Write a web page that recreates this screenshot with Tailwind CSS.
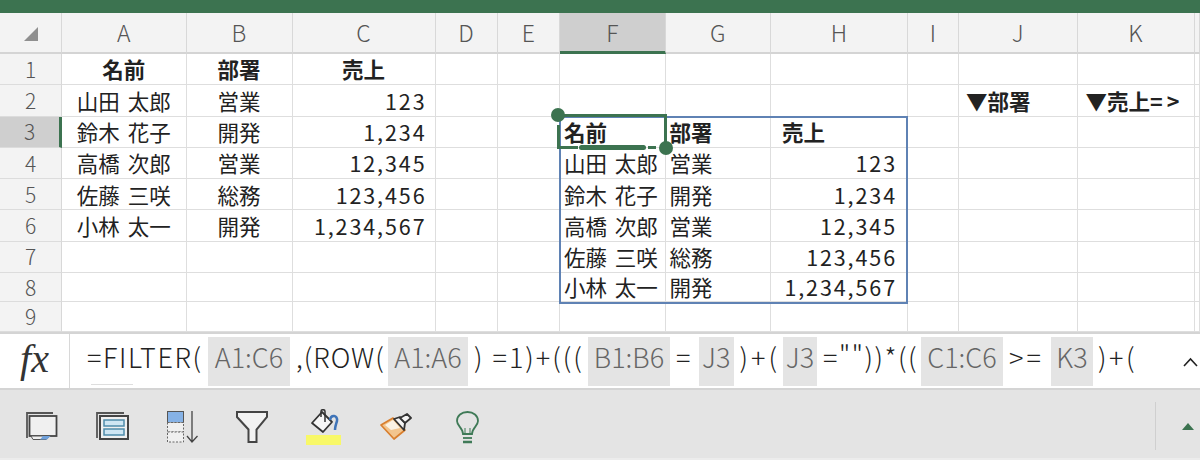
<!DOCTYPE html>
<html lang="ja">
<head>
    <meta charset="UTF-8">
    <title>Excel FILTER</title>
    <script src="https://cdn.jsdelivr.net/npm/@tailwindcss/browser@4"></script>
</head>
<body class="bg-white overflow-hidden font-['Noto_Sans_CJK_JP','Noto_Sans',sans-serif] text-[#222]">
<div class="w-[1200px] h-[462px] flex flex-col relative">
    <!-- title strip -->
    <div class="h-[13px] bg-[#3c7350]"></div>

    <!-- sheet -->
    <div id="sheet" class="relative h-[319px] grid grid-cols-[62px_124.5px_106px_143px_62px_62.5px_105.5px_105.5px_137px_51px_118.5px_117px_5.5px] grid-rows-[41px_31.3px_31.3px_31.3px_31.3px_31.3px_31.3px_31.3px_28.9px]"></div>

    <!-- formula bar -->
    <div class="relative h-[58px] border-t-2 border-b-2 border-[#d4d4d4] flex items-center text-[27px] font-light text-[#222] whitespace-nowrap leading-none">
        <div class="w-[70px] h-full shrink-0 border-r border-[#d8d8d8] flex items-center justify-center font-['Liberation_Serif',serif] italic text-[40px] leading-none text-[#333] pb-1">fx</div>
        <span class="w-[138px] pl-[17px] pb-[10px] shrink-0 tracking-[1.6px]">=FILTER(</span>
        <span class="w-[82px] h-[49px] pb-[10px] shrink-0 bg-[#e4e4e4] text-[#666] flex items-center justify-center">A1:C6</span>
        <span class="w-[98px] pl-[6px] pb-[10px] shrink-0 tracking-[1px]">,(ROW(</span>
        <span class="w-[80px] h-[49px] pb-[10px] shrink-0 bg-[#e4e4e4] text-[#666] flex items-center justify-center">A1:A6</span>
        <span class="w-[120px] pl-[6px] pb-[10px] shrink-0 tracking-[2px]">) =1)+(((</span>
        <span class="w-[82px] h-[49px] pb-[10px] shrink-0 bg-[#e4e4e4] text-[#666] flex items-center justify-center">B1:B6</span>
        <span class="w-[29px] pl-[6px] pb-[10px] shrink-0">=</span>
        <span class="w-[34.5px] h-[49px] pb-[10px] shrink-0 bg-[#e4e4e4] text-[#666] flex items-center justify-center">J3</span>
        <span class="w-[49.5px] pl-[6px] pb-[10px] shrink-0 tracking-[3px]">)+(</span>
        <span class="w-[34px] h-[49px] pb-[10px] shrink-0 bg-[#e4e4e4] text-[#666] flex items-center justify-center">J3</span>
        <span class="w-[104px] pl-[6px] pb-[10px] shrink-0 tracking-[1.5px]">=""))*((</span>
        <span class="w-[82px] h-[49px] pb-[10px] shrink-0 bg-[#e4e4e4] text-[#666] flex items-center justify-center">C1:C6</span>
        <span class="w-[48px] pl-[6px] pb-[10px] shrink-0 tracking-[3px]">&gt;=</span>
        <span class="w-[42px] h-[49px] pb-[10px] shrink-0 bg-[#e4e4e4] text-[#666] flex items-center justify-center">K3</span>
        <span class="pl-[5px] pb-[10px] shrink-0 tracking-[2.5px]">)+(</span>
        <svg class="absolute left-[1183px] top-[23px]" width="15" height="10" viewBox="0 0 15 10" fill="none" stroke="#222" stroke-width="1.6"><path d="M1 9 7.5 2 14 9"/></svg>
        <div class="absolute left-[91px] top-[50px] w-[42px] h-px bg-[#dedede]"></div>
    </div>

    <!-- toolbar -->
    <div class="relative h-[70px] bg-[#e4e4e4] border-b-2 border-[#ececec] flex items-start pt-[19px]">
        <svg class="ml-[26px] mt-[3px] shrink-0" width="32" height="28" viewBox="0 0 32 28" fill="none">
            <path d="M1 26V1H27" stroke="#555" stroke-width="1.8"/>
            <rect x="3.5" y="4" width="27" height="20" fill="#f0f0f0" stroke="#444" stroke-width="1.8"/>
            <path d="M5 24 7 27.5H20L24 24Z" fill="#f0f0f0" stroke="#555"/>
            <path d="M14 27.5H21L24.500 24H17Z" fill="#6fa1dc"/>
        </svg>
        <svg class="ml-[38px] mt-[3px] shrink-0" width="33" height="28" viewBox="0 0 33 28" fill="none">
            <path d="M1 26V1H28" stroke="#555" stroke-width="1.800"/>
            <rect x="4" y="4" width="28" height="23" fill="#f0f0f0" stroke="#444" stroke-width="2"/>
            <rect x="8" y="8" width="20" height="6" fill="#cfe6f3" stroke="#4f8cab" stroke-width="1.500"/>
            <rect x="8" y="17" width="20" height="6" fill="#cfe6f3" stroke="#4f8cab" stroke-width="1.500"/>
        </svg>
        <svg class="ml-[38px] mt-[2px] shrink-0" width="32" height="32" viewBox="0 0 32 32" fill="none">
            <rect x="0.500" y="0.500" width="16" height="11" fill="#86b2e6" stroke="#555"/>
            <rect x="0.500" y="11.500" width="16" height="9.500" fill="#f0f0f0" stroke="#666" stroke-dasharray="2 1.500"/>
            <rect x="0.500" y="21" width="16" height="10" fill="#f0f0f0" stroke="#666" stroke-dasharray="2 1.500"/>
            <path d="M25 0V30M20 25 25 31 30.500 25" stroke="#444" stroke-width="1.300"/>
        </svg>
        <svg class="ml-[37px] mt-[2px] shrink-0" width="32" height="32" viewBox="0 0 32 32">
            <path d="M1 1H31V6L20.500 18.500V31H12.500V18.500L1 6Z" fill="#f2f2f2" stroke="#444" stroke-width="2"/>
        </svg>
        <svg class="ml-[38px] shrink-0" width="35" height="36" viewBox="0 0 35 36" fill="none">
            <path d="M6 14 16 3 26 13 17 23Z" fill="#f6f6f6" stroke="#333" stroke-width="1.800" stroke-linejoin="round"/>
            <path d="M15 8V2.500C15 0 19 0 19 2.500V13" stroke="#333" stroke-width="1.500"/>
            <path d="M24 11C25 5 32 6 31 12 30 15 29 18 29 21" stroke="#3f74b8" stroke-width="2.500"/>
            <rect x="0" y="26" width="35" height="10" fill="#f8f868"/>
        </svg>
        <svg class="ml-[39px] mt-[4px] shrink-0" width="32" height="28" viewBox="0 0 32 28" fill="none">
            <path d="M1 12 13 5 25 17 14 26Z" fill="#f3c58e" stroke="#d97f2e" stroke-width="1.700" stroke-linejoin="round"/>
            <path d="M5 12 13 7 20 15 11 17Z" fill="#fbf2e4"/>
            <path d="M14 6 20 4 25 10 24 17Z" fill="#f4f4f4" stroke="#333" stroke-width="1.800" stroke-linejoin="round"/>
            <path d="M20 5 27 1 31 5 25 10Z" fill="#f4f4f4" stroke="#333" stroke-width="1.800" stroke-linejoin="round"/>
        </svg>
        <svg class="ml-[44px] mt-[2px] shrink-0" width="23" height="33" viewBox="0 0 23 33" fill="none" stroke="#3f7a57" stroke-width="1.800">
            <path d="M7 23C7 17 1 15 1 10 1 4.500 5.500 1 11.500 1S22 4.500 22 10C22 15 16 17 16 23Z"/>
            <path d="M7 27H16"/>
            <path d="M7 31H16" stroke-width="2.500"/>
            <path d="M9 23V17M14 23V17" stroke-width="1"/>
        </svg>
        <div class="absolute left-[1155px] top-[12px] w-px h-[48px] bg-[#cfcfcf]"></div>
        <div class="absolute left-[1182px] top-[33px] w-0 h-0 border-x-[6px] border-x-transparent border-b-[7px] border-b-[#3c7350]"></div>
    </div>
</div>

<script>
    const colLabels = ["", "A", "B", "C", "D", "E", "F", "G", "H", "I", "J", "K", ""];
    // row -> column index -> [text, extra classes]
    const center = "justify-center text-[21.5px] [word-spacing:3px]";
    const bold = "justify-center text-[21.5px] font-bold";
    const boldLeft = "justify-start pl-[4px] text-[21.5px] font-bold";
    const left = "justify-start pl-[4px] text-[21.5px] [word-spacing:3px]";
    const numC = "justify-end pr-[8px] text-[21.5px] tracking-[1.9px]";
    const numH = "justify-end pr-[10px] text-[21.5px] tracking-[1.9px]";
    const data = {
        1: {1: ["名前", bold], 2: ["部署", bold], 3: ["売上", bold]},
        2: {1: ["山田 太郎", center], 2: ["営業", center], 3: ["123", numC], 10: ["▼部署", "justify-start pl-[7px] text-[21.5px] font-bold"], 11: ['▼売上<span class="tracking-[4px]">=&gt;</span>', "justify-start pl-[8px] text-[21.5px] font-bold"]},
        3: {1: ["鈴木 花子", center], 2: ["開発", center], 3: ["1,234", numC], 6: ["名前", boldLeft], 7: ["部署", boldLeft], 8: ["売上", "justify-start pl-[11px] text-[21.5px] font-bold"]},
        4: {1: ["高橋 次郎", center], 2: ["営業", center], 3: ["12,345", numC], 6: ["山田 太郎", left], 7: ["営業", left], 8: ["123", numH]},
        5: {1: ["佐藤 三咲", center], 2: ["総務", center], 3: ["123,456", numC], 6: ["鈴木 花子", left], 7: ["開発", left], 8: ["1,234", numH]},
        6: {1: ["小林 太一", center], 2: ["開発", center], 3: ["1,234,567", numC], 6: ["高橋 次郎", left], 7: ["営業", left], 8: ["12,345", numH]},
        7: {6: ["佐藤 三咲", left], 7: ["総務", left], 8: ["123,456", numH]},
        8: {6: ["小林 太一", left], 7: ["開発", left], 8: ["1,234,567", numH]},
    };
    const sheet = document.getElementById("sheet");
    let html = "";
    colLabels.forEach((label, c) => {
        const sel = c === 6;
        const bg = sel ? "bg-[#cfcfcf] border-b-[3px] border-b-[#3c7350]" : "bg-[#f3f3f3] border-b-2 border-b-[#d4d4d4]";
        html += `<div class="${bg} border-r border-r-[#d8d8d8] flex items-center justify-center text-[23px] leading-none font-light text-[#555]">${label}</div>`;
    });
    for (let r = 1; r <= 9; r++) {
        const sel = r === 3;
        const bg = sel ? "bg-[#cfcfcf] border-r-[3px] border-r-[#3c7350]" : "bg-[#f3f3f3] border-r border-r-[#d8d8d8]";
        html += `<div class="${bg} border-b border-b-[#dcdcdc] flex items-center justify-center text-[21px] leading-none font-light text-[#555]">${r}</div>`;
        for (let c = 1; c <= 12; c++) {
            const cell = (data[r] || {})[c] || ["", ""];
            html += `<div class="border-r border-b border-[#dedede] flex items-center whitespace-nowrap leading-none ${cell[1]}">${cell[0]}</div>`;
        }
    }
    // table range and selection handles lie over the grid
    html += `<div class="absolute left-[559px] top-[103px] w-[349px] h-[188px] border-2 border-[#5f82b4]"></div>`;
    html += `<div class="absolute left-[564px] top-[101px] w-[103px] h-[3px] bg-[#3c7350]"></div>`;
    html += `<div class="absolute left-[664px] top-[101px] w-[3px] h-[34px] bg-[#3c7350]"></div>`;
    html += `<div class="absolute left-[557px] top-[112px] w-[3px] h-[23px] bg-[#3c7350]"></div>`;
    html += `<div class="absolute left-[557px] top-[133px] w-[21px] h-[3px] bg-[#3c7350]"></div>`;
    html += `<div class="absolute left-[579px] top-[132px] w-[67px] h-[5px] rounded-full bg-[#3c7350]"></div>`;
    html += `<div class="absolute left-[648px] top-[133px] w-[8px] h-[3px] bg-[#3c7350]"></div>`;
    html += `<div class="absolute left-[551px] top-[95px] size-[14px] rounded-full bg-[#3c7350]"></div>`;
    html += `<div class="absolute left-[659px] top-[128px] size-[14px] rounded-full bg-[#3c7350]"></div>`;
    html += `<svg class="absolute left-[24px] top-[14px]" width="14" height="14" viewBox="0 0 14 14"><path d="M14 0V14H0Z" fill="#8f8f8f"/></svg>`;
    sheet.innerHTML = html;
</script>
</body>
</html>
